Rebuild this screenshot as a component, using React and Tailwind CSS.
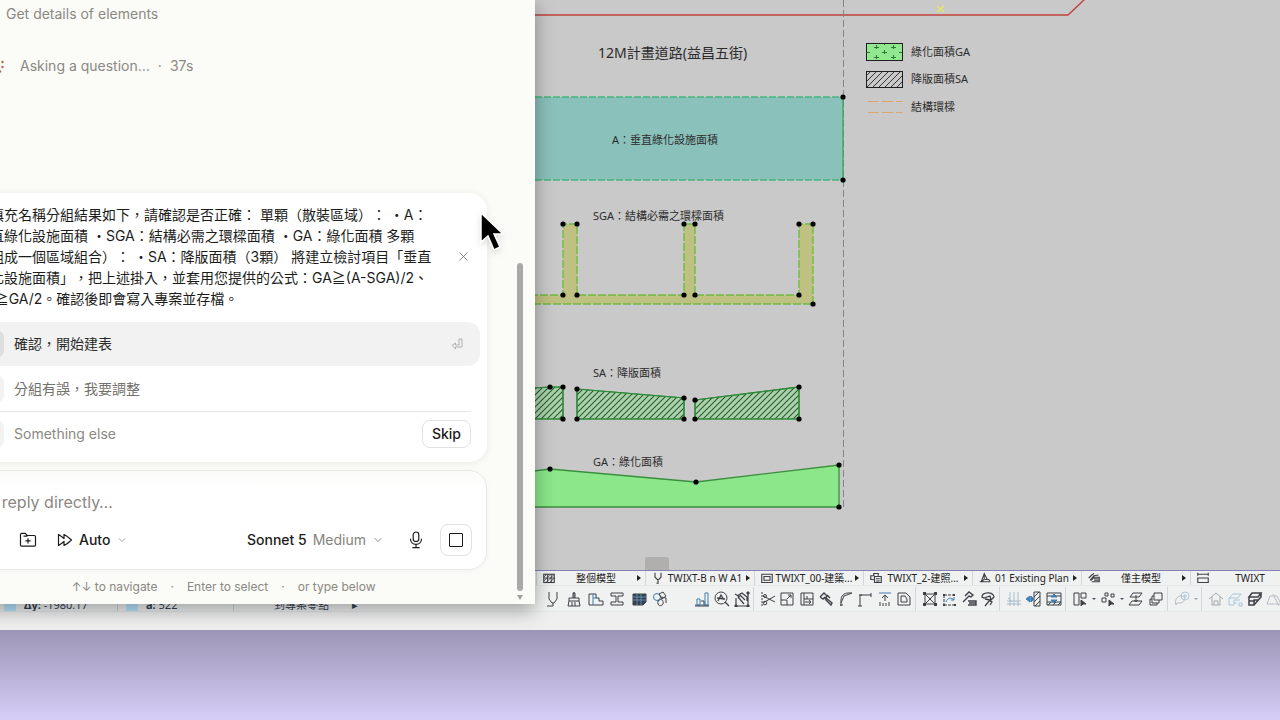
import React from 'react';
import { ChevronDown, X } from 'lucide-react';

const dark = '#3d4145';
const blue = '#3f7fb5';
const pale = '#b4bec6';

function Glyph({ children, color = dark, className = 'size-4' }) {
  return (
    <svg viewBox="0 0 16 16" fill="none" stroke={color} className={`shrink-0 ${className}`} aria-hidden="true">
      {children}
    </svg>
  );
}

const tabs = [
  {
    label: '整個模型',
    icon: <Glyph className="size-3"><rect x="1" y="3" width="14" height="11" strokeWidth="1.5" /><path d="M1 7 5 3M1 12 9 4M4 14 14 4M9 14l6-6M1 8h14M6 3v11M11 3v11" strokeWidth="1.2" /></Glyph>,
  },
  {
    label: 'TWIXT-B n W A1',
    icon: <Glyph className="size-3"><path d="M4 1v6l3 3h2l3-3V1M8 10v5M6 15h3" strokeWidth="1.5" /></Glyph>,
  },
  {
    label: 'TWIXT_00-建築...',
    icon: <Glyph className="size-3"><path d="M1 3h14v11H1zM4 6h8v5H4z" strokeWidth="1.5" /></Glyph>,
  },
  {
    label: 'TWIXT_2-建照...',
    icon: <Glyph className="size-3"><path d="M5 10H1V5h5M5 5V2h6v3M6 6h9v8H6zM8 9h5M8 12h5" strokeWidth="1.6" /></Glyph>,
  },
  {
    label: '01 Existing Plan',
    icon: <Glyph className="size-3"><path d="M1 13h14M3 13 7 2l4 8M7 2v8l-4 3M8 10h5l2 3" strokeWidth="1.4" /></Glyph>,
  },
  {
    label: '僅主模型',
    icon: <Glyph className="size-3"><path d="M1 8 5 4l3-2M3 11l5-6 6-1M5 13h10V7H8l-4 4M8 9h6M8 11h6" strokeWidth="1.6" /></Glyph>,
  },
  {
    label: 'TWIXT',
    icon: <Glyph className="size-3"><path d="M1 3h14M1 1v4M15 1v4M1 8h14v6H1z" strokeWidth="1.5" /></Glyph>,
  },
];

// toolbar groups, each one closed by a separator
const groups = [
  {
    width: 'w-[123px]',
    icons: [
      ['pen', <Glyph><path d="M4 1v7l3 4h2l3-4V1M8 12v3M2 15h6" /></Glyph>],
      ['brush', <Glyph><path d="M8 1v6M3 7h10v3H3zM3 10l-1 5h12l-1-5M6 11v4M9 11v4M7 7V2h2v5" /></Glyph>],
      ['profile', <Glyph><path d="M1 3h7v4h3v3h4v4H1z" /><path d="M5 3v11M5 7h3" stroke={blue} /></Glyph>],
      ['beam', <Glyph><path d="M2 2h12v3H9v6h5v3H2v-3h5V5H2z" /></Glyph>],
      ['grid', <Glyph><path d="M2 3h13v8l-3 3H2z" fill="#33424f" /><path d="M2 6h13M2 9h13M6 3v11M10 3v11" stroke="#6f9cc4" strokeWidth="0.8" /></Glyph>],
      ['surface', <Glyph><circle cx="5" cy="6" r="3.5" stroke={blue} /><path d="M7 3l4-2 3 4-4 3zM6 10c3-3 6-1 5 3-2 3-6 2-5-3zM9 6l5 1v5" /></Glyph>],
    ],
  },
  {
    width: 'w-14',
    icons: [
      ['chart', <Glyph><path d="M3 8h3v6H3zM11 2h3v12h-3zM1 14h14" stroke={blue} /><path d="M7 10h3v4M1 15h14" /></Glyph>],
      ['inspect', <Glyph><circle cx="7" cy="7" r="6" /><path d="M11 11l4 4M4 10l3-6 3 5M3 7l8 1" strokeWidth="1.3" /></Glyph>],
      ['edit', <Glyph><path d="M2 7v8h12V3M4 6l6 7M6 4l5 5M3 5l5-3 5 4v4M1 3l5 3" strokeWidth="1.2" /><path d="M1 14h2v2H1zM13 14h2v2h-2zM13 1h2v2h-2z" fill={dark} /></Glyph>],
    ],
  },
  {
    width: 'w-[152px]',
    icons: [
      ['split', <Glyph><path d="M2 1v14" strokeDasharray="2 1" /><path d="M3 5l12 6M3 12l12-7" /><circle cx="5" cy="12" r="1.8" /><circle cx="5" cy="5" r="1.5" /></Glyph>],
      ['resize', <Glyph><path d="M2 2h12v12H2zM2 9h6v5M8 8l4-4M9 4h3v3" /></Glyph>],
      ['stretch', <Glyph><path d="M2 2h12v12H2zM5 2v12M5 8h9M8 8V5M6 11h6M10 9l2 2-2 2" /></Glyph>],
      ['adjust', <Glyph><path d="M2 6l4-4 3 3-2 3M2 6l3 2 2-2M7 8l6 6 1-2-6-5M9 4l3 3" strokeWidth="1.4" /></Glyph>],
      ['fillet', <Glyph><path d="M3 15V9c0-4 3-7 7-7h4M3 12l3-7 8-3M2 14h3" /></Glyph>],
      ['corner', <Glyph><path d="M3 15V4h11M1 15h4M14 2v4M2 4h3" /></Glyph>],
      ['elevate', <Glyph><path d="M2 2h12" stroke={blue} /><path d="M8 10V4M5 7l3-3 3 3M3 15v-4M6 15v-3M9 15v-3M12 15v-4" /></Glyph>],
      ['offset', <Glyph><path d="M2 2h8l4 4v8H2zM5 5h4l2 3v3H5z" /></Glyph>],
    ],
  },
  {
    width: 'w-[74px]',
    icons: [
      ['trim', <Glyph><path d="M3 3h10v10H3zM3 3l10 10M13 3 3 13" /><path d="M1 1h3v3H1zM12 1h3v3h-3zM1 12h3v3H1zM12 12h3v3h-3z" fill={dark} stroke="none" /></Glyph>],
      ['curve', <Glyph><path d="M3 4h9M3 4v10M3 14h10" strokeDasharray="3 1" /><path d="M5 11c1-4 5-5 8-2M13 6v3h-3" stroke={blue} /><path d="M2 3h2v2H2zM12 3h2v2h-2zM2 13h2v2H2zM13 13h2v2h-2z" fill={dark} stroke="none" /></Glyph>],
      ['hammer', <Glyph><path d="M4 5l4-4 4 3-2 2-2-1-6 6M7 10h8v4H7M8 12h7" strokeWidth="1.4" /></Glyph>],
      ['hammers', <Glyph><path d="M2 6c0-5 11-6 12 0l-3 3-1-4-6 2zM5 8l5 1-5 6M9 9l3 2-2 3" strokeWidth="1.3" /></Glyph>],
    ],
  },
  {
    width: 'w-14',
    icons: [
      ['rebar', <Glyph color="#a9bccb"><path d="M4 1v14M8 1v14M12 1v14M1 10h14M1 13h14M2 7l4 4" /></Glyph>],
      ['wall', <Glyph><path d="M8 1h6v14H8zM8 6l5-5M8 11l6-6M9 15l5-5" /><path d="M0 8l4-3v6zM8 8 5 5v6z" fill={blue} stroke={blue} /></Glyph>],
      ['slab', <Glyph><path d="M1 2h14v12H1zM1 5h14M1 11h14M2 14l3-3M7 14l3-3M12 14l3-3" /><path d="M8 3l3 3H5zM8 12l3-3H5z" fill={blue} stroke={blue} /></Glyph>],
    ],
  },
  {
    width: 'w-[92px]',
    icons: [
      ['arrange', <Glyph><path d="M2 2h5v12H2zM9 2h5v5H9z" /><path d="M9 9v6l2-2h3z" fill={dark} /></Glyph>],
      ['', <i className="w-0 border-x-2 border-t-2 border-x-transparent border-t-gray-600" />],
      ['nodes', <Glyph><path d="M2 7h4v4H2zM5 2h3v3H5zM11 3h3v3h-3z" /><path d="M9 9v6l2-2h3z" fill={dark} /></Glyph>],
      ['', <i className="w-0 border-x-2 border-t-2 border-x-transparent border-t-gray-600" />],
      ['levels', <Glyph><path d="M5 2h9l-3 4H2zM4 10h10l-3 4H1zM8 4v7M6 9l2 2 2-2" /></Glyph>],
      ['stack', <Glyph><path d="M6 2h8v7H6zM4 5h2M4 5v7h7V9M2 8h2M2 8v6h7v-2" /></Glyph>],
    ],
  },
  {
    width: 'w-6',
    icons: [
      ['morph', <Glyph color={pale}><path d="M2 14c-2-5 2-10 6-9 5 1 2 7-2 7H3z" /><circle cx="11" cy="5" r="4" stroke="#abc9df" /><path d="M11 3v4M9 5h4" stroke="#abc9df" /></Glyph>],
      ['', <i className="w-0 border-x-2 border-t-2 border-x-transparent border-t-gray-400" />],
    ],
  },
  {
    width: 'w-[74px]',
    icons: [
      ['home', <Glyph color="#a5a9ad"><path d="M1 8l7-6 7 6M4 6v8h8V6M6 14v-4h4v4" /></Glyph>],
      ['export', <Glyph color="#a9c6dc"><path d="M2 7l4-4h8l-3 4zM2 7v7h5V9h6M7 12h3M12 12h3v3h-3z" /></Glyph>],
      ['block', <Glyph><path d="M2 6l3-4h9l-3 4zM2 6v8h5l7-8V2M7 14V9h5M2 10h6" strokeWidth="1.5" /></Glyph>],
      ['skew', <Glyph color={pale}><path d="M1 13l3-8h7l4 8zM7 3l6 12" /></Glyph>],
    ],
  },
];

const handles = [
  [843, 97], [843, 180],
  [563, 224], [577, 224], [684, 224], [695, 224], [799, 224], [813, 224],
  [563, 295], [577, 295], [684, 295], [695, 295], [799, 295], [813, 304],
  [550, 387], [563, 387], [563, 419], [577, 389], [577, 419], [684, 398], [684, 419],
  [695, 400], [695, 419], [799, 387], [799, 419],
  [550, 469], [696, 482], [839, 465], [839, 507],
];

function Drawing() {
  return (
    <svg
      lang="zh-Hant"
      className="block h-[570px] w-full font-['Noto_Sans','Noto_Sans_CJK_TC',sans-serif] [text-spacing-trim:space-all]"
      fill="#2c2c2c"
      fontSize="11"
    >
      <defs>
        <pattern id="hatch" width="6" height="6" patternUnits="userSpaceOnUse">
          <path d="M-1 1l2-2M0 6l6-6M5 7l2-2" stroke="#2c5a33" strokeWidth="1.1" />
        </pattern>
        <pattern id="hatchDark" width="6" height="6" patternUnits="userSpaceOnUse">
          <path d="M-1 1l2-2M0 6l6-6M5 7l2-2" stroke="#333" />
        </pattern>
      </defs>

      <path d="M0 15H1068L1085 -1" fill="none" stroke="#c0413d" strokeWidth="1.4" />
      <path d="M937 6l7 6M944 6l-7 6" stroke="#e3ec5a" strokeWidth="1.2" />
      <text x="598" y="58" fontSize="14">12M計畫道路(益昌五街)</text>

      <rect x="400" y="97" width="443" height="83" fill="#8bc1bb" />
      <path d="M400 97H843M400 180H843" stroke="#45b679" strokeWidth="1.4" strokeDasharray="7 2" />
      <path d="M843.5 0V507" stroke="#858585" strokeDasharray="7 3" />
      <path d="M843 97V180" stroke="#3fa965" strokeWidth="1.4" />
      <text x="612" y="144">A：垂直綠化設施面積</text>

      <path
        d="M400 295H563V224H577V295H684V224H695V295H799V224H813V304H400Z"
        fill="#bfc182"
      />
      <path
        d="M400 295H563V224H577V295H684V224H695V295H799V224H813V304H400"
        fill="none"
        stroke="#6fbb42"
        strokeWidth="1.4"
        strokeDasharray="8 2"
      />
      <text x="593" y="220">SGA：結構必需之環樑面積</text>

      <g stroke="#2d8b3a" strokeWidth="1.2">
        <path d="M500 390L550 387L563 387V419H500Z" fill="#abd3ab" />
        <path d="M577 389L684 398V419H577Z" fill="#abd3ab" />
        <path d="M695 400L799 387V419H695Z" fill="#abd3ab" />
        <path d="M500 390L550 387L563 387V419H500ZM577 389L684 398V419H577ZM695 400L799 387V419H695Z" fill="url(#hatch)" />
      </g>
      <text x="593" y="377">SA：降版面積</text>

      <path d="M500 475L550 469L696 482L839 465V507H500Z" fill="#8be78a" stroke="#3a8f3c" strokeWidth="1.3" />
      <text x="593" y="466">GA：綠化面積</text>

      {handles.map(([x, y]) => (
        <circle key={`${x}-${y}`} cx={x} cy={y} r="2.6" fill="#000" />
      ))}

      <rect x="866.5" y="43.5" width="36" height="17" fill="#92e891" stroke="#1e1e1e" />
      <path
        d="M876.500 45v4M874 47.500h5M893.500 45v4M891 47.500h5M884.500 50v4M882 52.500h5M876.500 55v4M874 57.500h5M893.500 55v4M891 57.500h5M867 52.500h3M899 52.500h3M884.500 44v1"
        stroke="#2b7a33"
      />
      <rect x="866.5" y="71.5" width="36" height="16" fill="url(#hatchDark)" stroke="#1e1e1e" />
      <path d="M868 101.5H903M868 112.5H903" stroke="#dba56c" strokeDasharray="11 3" />
      <text x="911" y="56">綠化面積GA</text>
      <text x="911" y="83">降版面積SA</text>
      <text x="911" y="111">結構環樑</text>

      <rect x="645" y="557" width="24" height="18" rx="3" fill="#b0afae" />
    </svg>
  );
}

function Tracker() {
  return (
    <div className="flex h-full w-[536px] shrink-0 items-end gap-2 font-['Noto_Sans','Noto_Sans_CJK_TC',sans-serif] text-[11px] leading-3 text-gray-700">
      <span className="ml-1 h-4 w-3 bg-sky-200" />
      <span className="w-[94px] border-r border-gray-300"><b>Δy:</b> -1980.17</span>
      <span className="h-4 w-3 bg-sky-200" />
      <span className="w-[88px] border-r border-gray-300"><b>a:</b> 522</span>
      <span className="ml-8 w-[70px]">到專案零點</span>
      <span>▸</span>
    </div>
  );
}

function Toolbar() {
  return (
    <div className="bg-[#f0f1f1]">
      <div className="flex h-[15px] overflow-hidden border-t border-[#8583b5] pl-[536px]">
        {tabs.map((tab) => (
          <button
            key={tab.label}
            className="flex h-[14px] w-[109px] shrink-0 items-center border-l border-gray-300 pr-1 pl-[6px] font-['Noto_Sans','Noto_Sans_CJK_TC',sans-serif] text-[10px] leading-[14px] text-[#222]"
          >
            {tab.icon}
            <span className="flex-1 text-center whitespace-nowrap">{tab.label}</span>
            <i className="border-y-[3px] border-l-4 border-y-transparent border-l-[#222]" />
          </button>
        ))}
      </div>
      <div className="flex h-[26px] items-center overflow-hidden border-t border-gray-200">
        <Tracker />
        <div className="flex items-center pl-[9px]">
          {groups.map((group, i) => (
            <div
              key={group.width + i}
              className={i === 0 ? 'flex items-center pr-5' : 'flex h-6 items-center border-r border-gray-300 pr-[3px] pl-[6px] last:border-0'}
            >
              <div className={`flex shrink-0 items-center justify-between ${group.width}`}>
                {group.icons.map(([name, icon], j) =>
                  name ? <button key={j} aria-label={name}>{icon}</button> : <React.Fragment key={j}>{icon}</React.Fragment>
                )}
              </div>
            </div>
          ))}
        </div>
      </div>
      <div className="h-[19px] border-t border-gray-200 bg-[#efefef]" />
    </div>
  );
}

function Question() {
  return (
    <section className="rounded-[18px] bg-white pt-[11px] pb-[6px] shadow-[0_1px_8px_rgba(0,0,0,0.08)]">
      <div className="flex items-center pr-4 pl-4">
        <p className="flex-1 text-[14px] leading-[21px] whitespace-nowrap text-[#1c1c1a]">
          依填充名稱分組結果如下，請確認是否正確： 單顆（散裝區域）： ・A：<br />
          垂直綠化設施面積 ・SGA：結構必需之環樑面積 ・GA：綠化面積 多顆<br />
          （組成一個區域組合）： ・SA：降版面積（3顆） 將建立檢討項目「垂直<br />
          綠化設施面積」，把上述掛入，並套用您提供的公式：GA≧(A-SGA)/2、<br />
          SA≧GA/2。確認後即會寫入專案並存檔。
        </p>
        <button aria-label="Close" className="text-[#777]"><X size={15} strokeWidth={1.4} /></button>
      </div>
      <div className="mx-[7px] mt-[13px]">
        <button className="flex h-[44px] w-full items-center gap-[10px] rounded-xl bg-[#f2f2f2] px-[9px] text-[14px] text-[#2b2b29]">
          <span className="grid size-7 place-items-center rounded-lg bg-[#dedede]">1</span>
          確認，開始建表
          <svg viewBox="0 0 12 12" fill="none" stroke="#a9a9a7" className="mr-2 ml-auto size-3">
            <path d="M8 1h3v8H4.500v2L1 7.500 4.500 5v2H8z" strokeWidth="0.9" />
          </svg>
        </button>
        <button className="flex h-[45px] w-full items-center gap-[10px] px-[9px] text-[14px] text-[#73726c]">
          <span className="grid size-7 place-items-center rounded-lg bg-[#f2f2f2]">2</span>
          分組有誤，我要調整
        </button>
      </div>
      <div className="mr-4 ml-4 flex h-[45px] items-center gap-[10px] border-t border-[#e6e6e3]">
        <label htmlFor="other" className="grid size-7 place-items-center rounded-lg bg-[#f2f2f2] text-[#73726c]">3</label>
        <input
          id="other"
          placeholder="Something else"
          className="min-w-0 flex-1 bg-transparent text-[14px] outline-none placeholder:text-[#8a8983]"
        />
        <button className="h-7 rounded-lg border border-[#e2e2df] px-[9px] text-[14px] font-medium text-[#1c1c1a]">Skip</button>
      </div>
    </section>
  );
}

function Composer() {
  return (
    <section className="mt-2 rounded-[18px] border border-[#e8e8e5] bg-linear-to-b from-[#fbfbfa] to-white to-20% px-[14px] pt-5 pb-[13px] shadow-[0_1px_5px_rgba(0,0,0,0.04)]">
      <input
        aria-label="Reply"
        placeholder="Or reply directly…"
        className="block h-[22px] w-full bg-transparent pl-1 text-base outline-none placeholder:text-[#8a8983]"
      />
      <div className="mt-[11px] flex items-center text-[14px] text-[#1c1c1a]">
        <button aria-label="Attach" className="mr-7 size-4 leading-4">+</button>
        <button aria-label="Add folder" className="mr-5">
          <svg viewBox="0 0 18 18" fill="none" stroke="currentColor" className="size-[18px]" strokeWidth="1.2">
            <path d="M1.500 14V3.500c0-.7.5-1.200 1.200-1.200h3.500l2 2.200h7.100c.7 0 1.200.5 1.200 1.200V14c0 .7-.5 1.200-1.200 1.200H2.700c-.7 0-1.200-.5-1.200-1.200zM4.500 5.200h4M9 7.200v5.200M6.400 9.800h5.200" />
          </svg>
        </button>
        <button className="flex items-center font-medium">
          <svg viewBox="0 0 16 16" fill="none" stroke="currentColor" className="mr-[6px] size-4" strokeWidth="1.2" strokeLinejoin="round">
            <path d="M1.500 2.500v11c0 0 4-2.500 5.500-4v4c3-1.500 6-4 7.500-5.500-1.500-1.500-4.500-4-7.500-5.500v4c-1.500-1.500-5.500-4-5.500-4z" />
          </svg>
          Auto
          <ChevronDown size={12} strokeWidth={1.5} className="ml-[6px] text-[#8a8983]" />
        </button>
        <button className="mr-6 ml-auto flex items-center font-medium">
          Sonnet 5
          <span className="ml-[6px] font-normal text-[#85847e]">Medium</span>
          <ChevronDown size={12} strokeWidth={1.5} className="ml-[6px] text-[#6d6c67]" />
        </button>
        <button aria-label="Dictate" className="mr-4">
          <svg viewBox="0 0 16 18" fill="none" stroke="currentColor" className="h-[18px] w-4" strokeWidth="1.2" strokeLinecap="round">
            <rect x="5.200" y="1" width="5.600" height="9.500" rx="2.800" />
            <path d="M2.500 8c0 3.200 2.300 5.300 5.500 5.300s5.500-2.100 5.500-5.300M8 13.300v3.400M4.800 16.700h6.400" />
          </svg>
        </button>
        <button aria-label="Stop" className="grid size-8 place-items-center rounded-lg border border-[#e2e2df]">
          <span className="size-[14px] rounded-[1px] border border-[#1c1c1a]" />
        </button>
      </div>
    </section>
  );
}

function ChatWindow() {
  return (
    <aside
      lang="zh-Hant"
      className="absolute top-0 -left-[88px] flex h-[604px] w-[623px] flex-col bg-[#fbfbf7] px-12 font-['Inter','Noto_Sans_CJK_TC',sans-serif] text-[14px] leading-5 text-[#8a8983] shadow-[0_6px_18px_rgba(0,0,0,0.35)] [text-spacing-trim:space-all]"
    >
      <p className="mt-1 pl-[46px]">Get details of elements</p>
      <div className="mt-8 flex items-center pl-[33px]">
        <svg viewBox="0 0 14 14" className="mr-[13px] size-[14px]" fill="#b0694a">
          <circle cx="5" cy="2" r="1" /><circle cx="9.500" cy="3" r="1.200" /><circle cx="5" cy="7" r="1" />
          <circle cx="9.500" cy="8" r="1.200" /><circle cx="7" cy="12.500" r="1.200" />
        </svg>
        Asking a question…
        <span className="mx-2">·</span>
        37s
      </div>
      <div className="mt-auto">
        <Question />
        <Composer />
        <div className="flex h-[34px] items-center justify-center gap-[13px] text-[12px]">
          <span>↑↓ to navigate</span>
          <span>·</span>
          <span>Enter to select</span>
          <span>·</span>
          <span>or type below</span>
        </div>
      </div>
      <div className="absolute right-3 bottom-[13px] h-[328px] w-[6px] rounded-full bg-[#a9a9a7]" />
      <i className="absolute right-3 bottom-1 border-x-[3px] border-t-[5px] border-x-transparent border-t-[#a0a09e]" />
    </aside>
  );
}

function App() {
  return (
    <div className="relative flex min-h-screen flex-col overflow-hidden bg-[#d6cef7]">
      <main className="bg-[#c9c9c9]">
        <Drawing />
        <Toolbar />
      </main>
      <div className="min-h-[90px] flex-1 bg-linear-to-b from-[#9c95b6] to-[#d6cef7]" />
      <ChatWindow />
      <svg viewBox="0 0 26 42" className="absolute top-[211px] left-[479px] h-[42px] w-[26px] drop-shadow-md">
        <path d="M2 2v29l7-6 6 14 6-3-6-13h9z" fill="#000" stroke="#fff" strokeWidth="1.500" />
      </svg>
    </div>
  );
}

export default App;
